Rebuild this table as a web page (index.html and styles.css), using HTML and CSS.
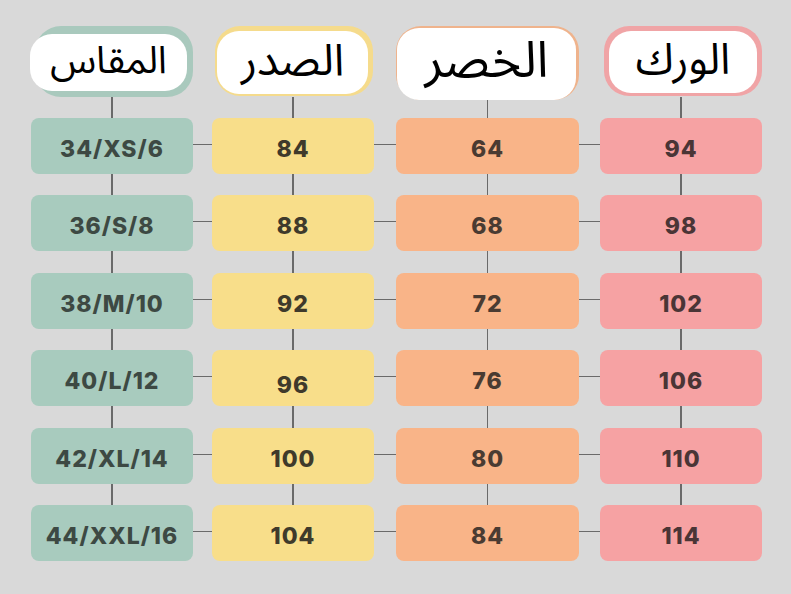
FILE: index.html
```html
<!DOCTYPE html>
<html lang="ar">
<head>
<meta charset="utf-8">
<title>جدول المقاسات</title>
<link rel="stylesheet" href="styles.css">
</head>
<body>
<div class="chart">
  <div class="head head-green"><div class="pill">المقاس</div></div>
  <div></div>
  <div class="head head-yellow"><div class="pill">الصدر</div></div>
  <div></div>
  <div class="head head-orange"><div class="pill">الخصر</div></div>
  <div></div>
  <div class="head head-pink"><div class="pill">الورك</div></div>

  <div class="vline"></div><div></div><div class="vline"></div><div></div><div class="vline"></div><div></div><div class="vline"></div>

  <div class="box green">34/XS/6</div><div class="hline"></div><div class="box yellow">84</div><div class="hline"></div><div class="box orange">64</div><div class="hline"></div><div class="box pink">94</div>
  <div class="vline"></div><div></div><div class="vline"></div><div></div><div class="vline"></div><div></div><div class="vline"></div>

  <div class="box green">36/S/8</div><div class="hline"></div><div class="box yellow">88</div><div class="hline"></div><div class="box orange">68</div><div class="hline"></div><div class="box pink">98</div>
  <div class="vline"></div><div></div><div class="vline"></div><div></div><div class="vline"></div><div></div><div class="vline"></div>

  <div class="box green">38/M/10</div><div class="hline"></div><div class="box yellow">92</div><div class="hline"></div><div class="box orange">72</div><div class="hline"></div><div class="box pink">102</div>
  <div class="vline"></div><div></div><div class="vline"></div><div></div><div class="vline"></div><div></div><div class="vline"></div>

  <div class="box green">40/L/12</div><div class="hline"></div><div class="box yellow low">96</div><div class="hline"></div><div class="box orange">76</div><div class="hline"></div><div class="box pink">106</div>
  <div class="vline"></div><div></div><div class="vline"></div><div></div><div class="vline"></div><div></div><div class="vline"></div>

  <div class="box green">42/XL/14</div><div class="hline"></div><div class="box yellow">100</div><div class="hline"></div><div class="box orange">80</div><div class="hline"></div><div class="box pink">110</div>
  <div class="vline"></div><div></div><div class="vline"></div><div></div><div class="vline"></div><div></div><div class="vline"></div>

  <div class="box green">44/XXL/16</div><div class="hline"></div><div class="box yellow">104</div><div class="hline"></div><div class="box orange">84</div><div class="hline"></div><div class="box pink">114</div>
</div>
</body>
</html>
```

FILE: styles.css
```css
html, body {
  margin: 0;
  padding: 0;
  background: #d9d9d9;
  width: 791px;
  height: 594px;
  overflow: hidden;
}

.chart {
  display: grid;
  grid-template-columns: 162px 19px 162px 22px 183px 21px 162px;
  grid-template-rows: 71px 21px 56px 21px 56px 22px 56px 21px 56px 22px 56px 21px 56px;
  padding: 26px 0 0 31px;
  direction: ltr;
}

.head {
  align-self: start;
  position: relative;
  z-index: 1;
  box-sizing: border-box;
  display: flex;
}

.pill {
  flex: 1;
  background: #ffffff;
  border-radius: 22px;
  display: flex;
  align-items: center;
  justify-content: center;
  font-family: "Noto Sans Arabic", "DejaVu Sans", sans-serif;
  font-size: 38px;
  color: #000;
  line-height: 1;
  padding-bottom: 4px;
  box-sizing: border-box;
}

.head-green {
  height: 71px;
  margin-left: 4px;
  background: #a9c9bd;
  border-radius: 26px;
  padding: 8px 6px 6px 0;
}

.head-green .pill {
  margin-left: -5px;
}

.head-yellow {
  height: 70px;
  margin-left: 3px;
  margin-right: 1px;
  background: #f5db8c;
  border-radius: 25px;
  padding: 5px 5px 2px 2px;
}

.head-yellow .pill {
  font-size: 44px;
}

.head-orange {
  height: 74px;
  background: #efb38c;
  border-radius: 25px;
  padding: 2px 3px 0 1px;
}

.head-orange .pill {
  font-size: 50px;
  padding-bottom: 6px;
}

.head-pink {
  height: 70px;
  margin-left: 4px;
  background: #f0a4a6;
  border-radius: 25px;
  padding: 5px 5px 3px 5px;
}

.head-pink .pill {
  font-size: 43px;
}

.vline {
  justify-self: center;
  width: 1.5px;
  background: #6a6a6a;
}

.hline {
  align-self: center;
  height: 1.5px;
  margin-top: -3px;
  background: #6a6a6a;
}

.box {
  border-radius: 8px;
  display: flex;
  align-items: center;
  justify-content: center;
  font-family: "Inter", "DejaVu Sans", sans-serif;
  font-weight: 800;
  font-size: 23px;
  letter-spacing: 1px;
  padding-top: 6px;
  box-sizing: border-box;
}

.box.low {
  padding-top: 14px;
}

.green { background: #a8cbbe; color: #3d4943; }
.yellow { background: #f8de8a; color: #3f3a2b; }
.orange { background: #f9b488; color: #4a3b32; }
.pink { background: #f6a2a3; color: #4a3536; }
```
